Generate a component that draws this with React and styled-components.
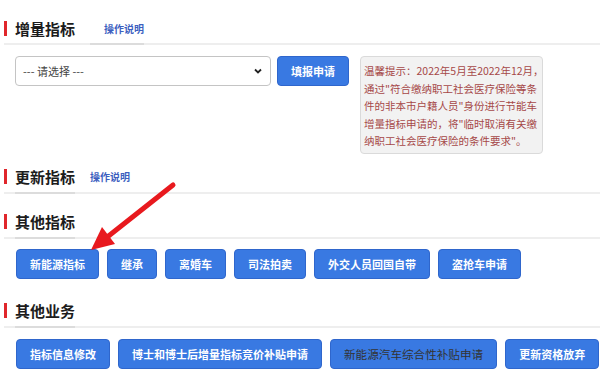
import styled, {createGlobalStyle} from "styled-components"

const Global = createGlobalStyle`
  html, body {
    margin: 0;
    padding: 0;
    background: #fff;
  }
  body {
    font-family: "Noto Sans CJK SC", "Noto Sans", sans-serif;
  }
`

const Page = styled.div`
  position: relative;
  width: 600px;
  height: 380px;
  overflow: hidden;
  padding-left: 4px;
  box-sizing: border-box;
`

const Section = styled.section`
  margin-top: ${p => p.$top}px;
`

const HeaderRow = styled.div`
  display: flex;
  align-items: stretch;
  height: 30px;
  border-bottom: 2px solid #eeeeee;
`

const Bar = styled.span`
  align-self: center;
  width: 3px;
  height: 15px;
  background: #e0262b;
  margin-right: 8px;
`

const Title = styled.h2`
  margin: 0;
  display: flex;
  align-items: center;
  font-size: 15px;
  font-weight: bold;
  color: #1c1c1c;
  ${p => p.$marked && "margin-bottom: -2px; border-bottom: 2px solid #dcdcdc;"}
`

const HelpLink = styled.a`
  display: flex;
  align-items: center;
  margin-left: 15px;
  padding-left: ${p => p.$pad || 0}px;
  font-size: 10px;
  font-weight: bold;
  color: #3d5fbf;
  text-decoration: none;
  ${p => p.$marked && "margin-bottom: -2px; border-bottom: 2px solid #dcdcdc;"}
`

const Content = styled.div`
  display: flex;
  align-items: flex-start;
  margin-top: ${p => p.$top}px;
  padding-left: ${p => p.$left}px;
  gap: ${p => p.$gap || 8}px;
`

const SelectBox = styled.div`
  display: flex;
  align-items: center;
  justify-content: space-between;
  width: 256px;
  height: 30px;
  box-sizing: border-box;
  padding: 0 7px;
  border: 1px solid #c4c4c4;
  border-radius: 4px;
  font-size: 11px;
  color: #444;
`

const Button = styled.button`
  height: 30px;
  padding: 0 13px;
  border: 1px solid #2f66cc;
  border-radius: 4px;
  background: #3979e2;
  color: ${p => (p.$plain ? "#333" : "#fff")};
  font-family: inherit;
  font-size: ${p => (p.$plain ? "11.6px" : "11px")};
  font-weight: ${p => (p.$plain ? "normal" : "bold")};
  white-space: nowrap;
  cursor: pointer;
`

const Tip = styled.div`
  margin-left: 5px;
  width: 183px;
  box-sizing: border-box;
  padding: 5px 3px 3px 3px;
  background: #f2f2f2;
  border: 1px solid #dadada;
  border-radius: 4px;
  font-size: 10.5px;
  line-height: 17.5px;
  color: #a64848;
  white-space: nowrap;
`

const Arrow = styled.svg`
  position: absolute;
  left: 0;
  top: 0;
  pointer-events: none;
`

const tipLines = [
  "温馨提示：2022年5月至2022年12月，",
  '通过"符合缴纳职工社会医疗保险等条',
  '件的非本市户籍人员"身份进行节能车',
  '增量指标申请的，将"临时取消有关缴',
  '纳职工社会医疗保险的条件要求"。',
]

const otherQuota = ["新能源指标", "继承", "离婚车", "司法拍卖", "外交人员回国自带", "盗抢车申请"]

export default function App() {
  return (
    <Page>
      <Global />
      <Section $top={13}>
        <HeaderRow>
          <Bar />
          <Title>增量指标</Title>
          <HelpLink href="#" $pad={14} $marked>操作说明</HelpLink>
        </HeaderRow>
        <Content $top={11} $left={11} $gap={6}>
          <SelectBox>
            <span>--- 请选择 ---</span>
            <svg width="10" height="10" viewBox="0 0 10 10">
              <path d="M2 3.5 L5 6.5 L8 3.5" fill="none" stroke="#222" strokeWidth="1.8" />
            </svg>
          </SelectBox>
          <Button>填报申请</Button>
          <Tip>
            {tipLines.map(l => (
              <div key={l}>{l}</div>
            ))}
          </Tip>
        </Content>
      </Section>

      <Section $top={8}>
        <HeaderRow>
          <Bar />
          <Title $marked>更新指标</Title>
          <HelpLink href="#">操作说明</HelpLink>
        </HeaderRow>
      </Section>

      <Section $top={13}>
        <HeaderRow>
          <Bar />
          <Title $marked>其他指标</Title>
        </HeaderRow>
        <Content $top={10} $left={12}>
          {otherQuota.map(t => (
            <Button key={t}>{t}</Button>
          ))}
        </Content>
      </Section>

      <Section $top={17}>
        <HeaderRow>
          <Bar />
          <Title $marked>其他业务</Title>
        </HeaderRow>
        <Content $top={11} $left={12}>
          <Button>指标信息修改</Button>
          <Button>博士和博士后增量指标竞价补贴申请</Button>
          <Button $plain>新能源汽车综合性补贴申请</Button>
          <Button>更新资格放弃</Button>
        </Content>
      </Section>

      <Arrow width="600" height="380" viewBox="0 0 600 380">
        <line x1="173" y1="185" x2="106" y2="238" stroke="#e8191e" strokeWidth="5" strokeLinecap="round" />
        <polygon points="91,250 102,227 115,244" fill="#e8191e" />
      </Arrow>
    </Page>
  )
}
